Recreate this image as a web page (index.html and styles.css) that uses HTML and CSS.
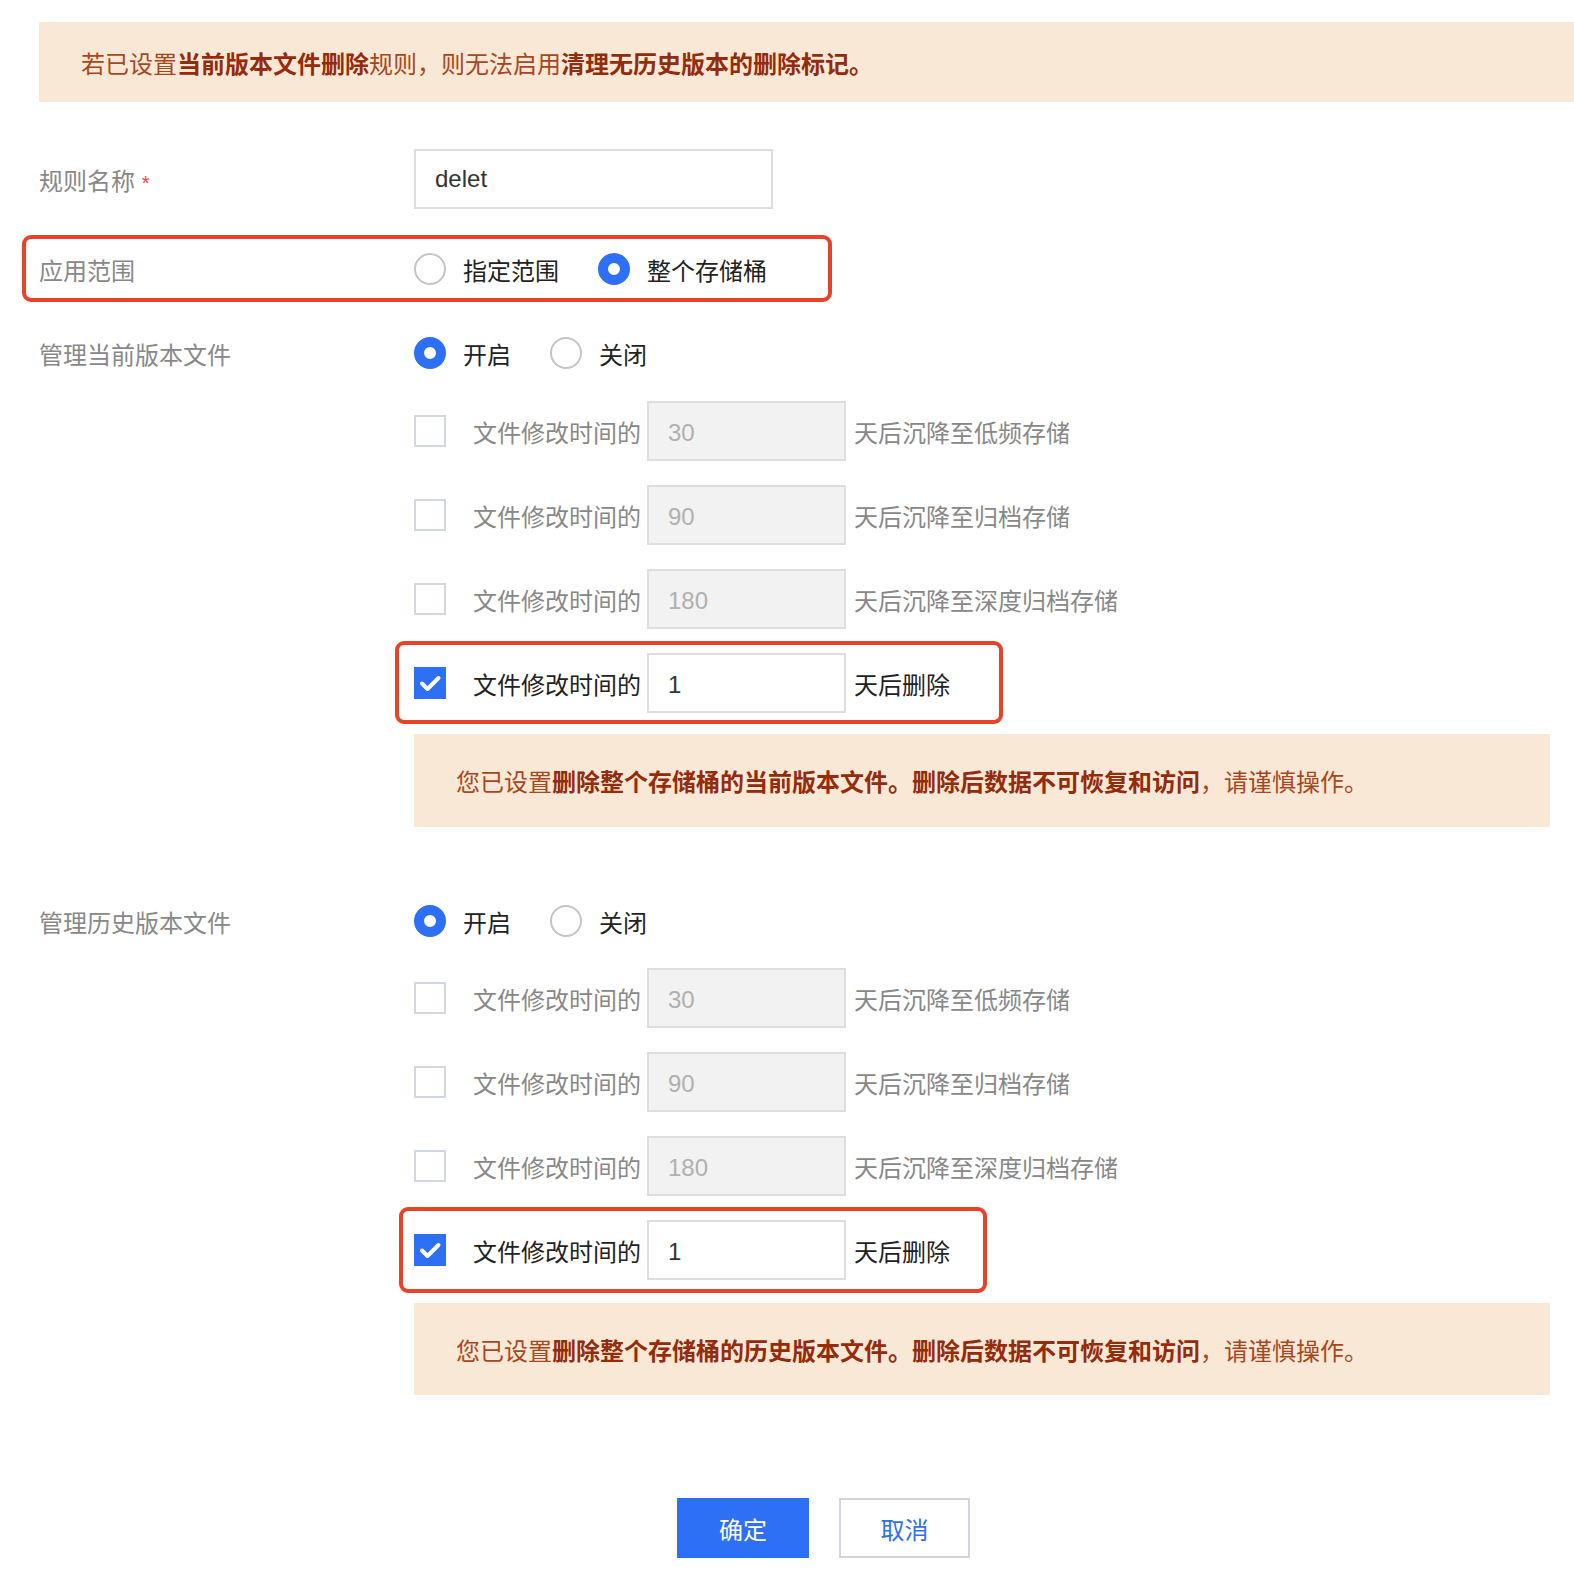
FILE: index.html
```html
<!DOCTYPE html>
<html lang="zh-CN">
<head>
    <meta charset="UTF-8">
    <meta name="viewport" content="width=device-width, initial-scale=1.0">
    <title>生命周期规则</title>
    <link rel="stylesheet" href="styles.css">
</head>
<body>
    <div class="page">
        <div class="notice">若已设置<b>当前版本文件删除</b>规则，则无法启用<b>清理无历史版本的删除标记。</b></div>

        <div class="row row-name">
            <div class="label">规则名称 <span class="star">*</span></div>
            <div class="text-input">delet</div>
        </div>

        <div class="row row-scope mark mark-scope">
            <div class="label">应用范围</div>
            <div class="radio-group">
                <span class="radio"></span><span class="radio-text">指定范围</span>
                <span class="radio on"></span><span class="radio-text">整个存储桶</span>
            </div>
        </div>

        <!-- 当前版本 -->
        <div class="row row-manage">
            <div class="label">管理当前版本文件</div>
            <div class="radio-group">
                <span class="radio on"></span><span class="radio-text">开启</span>
                <span class="radio"></span><span class="radio-text">关闭</span>
            </div>
        </div>
        <div class="check-list">
            <div class="check-row off">
                <span class="checkbox"></span>
                <span class="check-text">文件修改时间的</span>
                <span class="num-input">30</span>
                <span class="after-text">天后沉降至低频存储</span>
            </div>
            <div class="check-row off">
                <span class="checkbox"></span>
                <span class="check-text">文件修改时间的</span>
                <span class="num-input">90</span>
                <span class="after-text">天后沉降至归档存储</span>
            </div>
            <div class="check-row off">
                <span class="checkbox"></span>
                <span class="check-text">文件修改时间的</span>
                <span class="num-input">180</span>
                <span class="after-text">天后沉降至深度归档存储</span>
            </div>
            <div class="check-row mark mark-del1">
                <span class="checkbox on"><svg viewBox="0 0 32 32" width="32" height="32"><path d="M8 16.5l5.5 5.5L24.5 11" fill="none" stroke="#fff" stroke-width="4" stroke-linecap="round" stroke-linejoin="round"/></svg></span>
                <span class="check-text">文件修改时间的</span>
                <span class="num-input">1</span>
                <span class="after-text">天后删除</span>
            </div>
        </div>
        <div class="warn warn-1">您已设置<b>删除整个存储桶的当前版本文件。删除后数据不可恢复和访问</b>，请谨慎操作。</div>

        <!-- 历史版本 -->
        <div class="row row-history">
            <div class="label">管理历史版本文件</div>
            <div class="radio-group">
                <span class="radio on"></span><span class="radio-text">开启</span>
                <span class="radio"></span><span class="radio-text">关闭</span>
            </div>
        </div>
        <div class="check-list check-list-2">
            <div class="check-row off">
                <span class="checkbox"></span>
                <span class="check-text">文件修改时间的</span>
                <span class="num-input">30</span>
                <span class="after-text">天后沉降至低频存储</span>
            </div>
            <div class="check-row off">
                <span class="checkbox"></span>
                <span class="check-text">文件修改时间的</span>
                <span class="num-input">90</span>
                <span class="after-text">天后沉降至归档存储</span>
            </div>
            <div class="check-row off">
                <span class="checkbox"></span>
                <span class="check-text">文件修改时间的</span>
                <span class="num-input">180</span>
                <span class="after-text">天后沉降至深度归档存储</span>
            </div>
            <div class="check-row mark mark-del2">
                <span class="checkbox on"><svg viewBox="0 0 32 32" width="32" height="32"><path d="M8 16.5l5.5 5.5L24.5 11" fill="none" stroke="#fff" stroke-width="4" stroke-linecap="round" stroke-linejoin="round"/></svg></span>
                <span class="check-text">文件修改时间的</span>
                <span class="num-input">1</span>
                <span class="after-text">天后删除</span>
            </div>
        </div>
        <div class="warn warn-2">您已设置<b>删除整个存储桶的历史版本文件。删除后数据不可恢复和访问</b>，请谨慎操作。</div>

        <div class="buttons">
            <div class="btn btn-ok">确定</div>
            <div class="btn btn-cancel">取消</div>
        </div>
    </div>
</body>
</html>
```
FILE: styles.css
```css
*{margin: 0; padding: 0; box-sizing: border-box;}
body{
    margin: 0;
    background: #fff;
    font-family: "Liberation Sans", "Noto Sans CJK SC", sans-serif;
    font-size: 24px;
    color: #222;
}
b{font-weight: 700;}

.page{
    padding: 22px 0 40px 39px;
}

/* 提示条 */
.notice{
    height: 80px;
    display: flex;
    align-items: center;
    padding-left: 42px;
    background: #fae8d7;
    color: #a8471d;
}
.notice b, .warn b{color: #952b0a;}

/* 表单行 */
.row{
    height: 60px;
    display: flex;
    align-items: center;
}
.label{
    width: 375px;
    flex-shrink: 0;
    color: #888;
}
.star{color: #e54545; font-size: 20px;}

.row-name{margin-top: 47px;}
.row-scope{margin-top: 30px;}
.row-manage{margin-top: 24px;}
.row-history{margin-top: 64px;}

.text-input{
    width: 359px;
    height: 60px;
    border: 2px solid #dedede;
    padding-left: 19px;
    display: flex;
    align-items: center;
    color: #333;
}

/* 单选 */
.radio-group{
    display: flex;
    align-items: center;
}
.radio{
    width: 32px;
    height: 32px;
    border-radius: 50%;
    border: 2px solid #c4c4c4;
    background: #fff;
    flex-shrink: 0;
}
.radio.on{
    border: 10px solid #2d6ff5;
}
.radio-text{
    margin-left: 17px;
    margin-right: 39px;
    color: #222;
}

/* 复选行 */
.check-list{
    margin-top: 18px;
    margin-left: 375px;
    display: flex;
    flex-direction: column;
    gap: 24px;
}
.check-list-2{margin-top: 17px;}
.check-row{
    height: 60px;
    display: flex;
    align-items: center;
    color: #222;
}
.checkbox{
    width: 32px;
    height: 32px;
    border: 2px solid #d3d7e0;
    background: #fff;
    flex-shrink: 0;
}
.checkbox.on{
    border: none;
    background: #2d6ff5;
}
.checkbox svg{display: block;}
.check-text{
    margin-left: 27px;
    width: 174px;
}
.num-input{
    width: 199px;
    height: 60px;
    border: 2px solid #dedede;
    padding: 3px 0 0 19px;
    display: flex;
    align-items: center;
    color: #333;
    background: #fff;
}
.after-text{margin-left: 8px;}

.check-row.off{color: #888;}
.check-row.off .num-input{
    background: #f2f2f2;
    color: #b0b0b0;
}

/* 红色标注框 */
.mark{position: relative;}
.mark::after{
    content: "";
    position: absolute;
    box-sizing: border-box;
    border: 4px solid #ea4129;
    border-radius: 9px;
    pointer-events: none;
}
.mark-scope::after{left: -17px; top: -4px; width: 810px; height: 67px;}
.mark-del1::after{left: -19px; top: -12px; width: 608px; height: 83px;}
.mark-del2::after{left: -15px; top: -13px; width: 588px; height: 86px;}

/* 警告 */
.warn{
    margin-left: 375px;
    width: 1136px;
    display: flex;
    align-items: center;
    padding-left: 42px;
    background: #fae8d7;
    color: #a8471d;
}
.warn-1{margin-top: 21px; height: 93px;}
.warn-2{margin-top: 23px; height: 92px;}

/* 按钮 */
.buttons{
    margin-top: 103px;
    margin-left: 638px;
    display: flex;
    gap: 30px;
}
.btn{
    height: 60px;
    display: flex;
    align-items: center;
    justify-content: center;
}
.btn-ok{
    width: 132px;
    background: #2d6ff5;
    color: #fff;
}
.btn-cancel{
    width: 131px;
    border: 2px solid #d0d5de;
    color: #2d6ff5;
    background: #fff;
}
```
